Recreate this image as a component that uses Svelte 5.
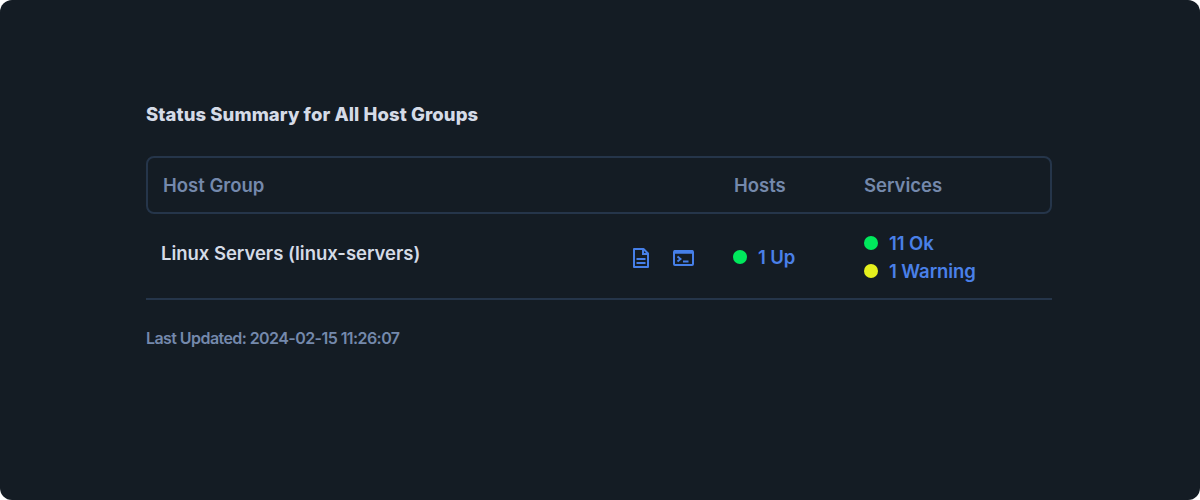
<script>
  const services = [
    { label: '11 Ok', tone: 'ok' },
    { label: '1 Warning', tone: 'warning' }
  ];
</script>

<main class="panel">
  <h1>Status Summary for All Host Groups</h1>
  <div class="grid head">
    <div>Host Group</div>
    <div>Hosts</div>
    <div>Services</div>
  </div>
  <div class="grid row">
    <div class="title">Linux Servers (linux-servers)</div>
    <div class="icons">
      <svg width="16" height="20" viewBox="0 0 16 20" fill="none" stroke="currentColor" stroke-width="2">
        <path d="M1 1H10.5L15 5.5V19H1Z" stroke-linejoin="round" />
        <path d="M10 1V6H15M3.5 11H12.5M3.5 15H12.5" stroke-width="2" />
      </svg>
      <svg width="21" height="16" viewBox="0 0 21 16" fill="none" stroke="currentColor" stroke-width="2">
        <rect x="1" y="1" width="19" height="14" rx="1" />
        <path d="M1 2H20" stroke-width="3.5" />
        <path d="M4.5 6.5L7.5 9L4.5 11.5M10 11.5H15.5" stroke-width="1.9" />
      </svg>
    </div>
    <div class="status"><i class="dot ok"></i><span>1 Up</span></div>
    <div>
      {#each services as s}
        <div class="status"><i class="dot {s.tone}"></i><span>{s.label}</span></div>
      {/each}
    </div>
  </div>
  <p>Last Updated: 2024-02-15 11:26:07</p>
</main>

<style>
  :global(body) { background: #fff; }
  .panel {
    box-sizing: border-box;
    width: 1200px;
    height: 500px;
    padding: 100px 148px 0 146px;
    border-radius: 12px;
    background: #141c24;
    font-family: Inter, "Liberation Sans", sans-serif;
    font-size: 18.5px;
    line-height: 28px;
    color: #d5dbe7;
    white-space: nowrap;
    overflow: hidden;
  }
  h1 { margin: 0 0 28px; font-size: 18.5px; font-weight: 800; line-height: 28px; letter-spacing: 0.08px; }
  .grid { display: grid; box-sizing: border-box; width: 906px; align-items: center; }
  .head {
    grid-template-columns: 571px 130px 1fr;
    height: 58px;
    padding-left: 15px;
    border: 2px solid #25354a;
    border-radius: 8px;
    color: #7489ac;
    font-weight: 600;
  }
  .row {
    grid-template-columns: 472px 100px 131px 1fr;
    height: 86px;
    padding: 2px 0 0 15px;
    border-bottom: 2px solid #25354a;
    font-weight: 600;
  }
  .title { padding-bottom: 8px; letter-spacing: -0.03px; }
  .icons { display: flex; align-items: center; gap: 24px; padding-top: 1px; color: #467fe8; }
  .status { display: flex; align-items: center; gap: 11px; height: 28px; color: #4a80e8; }
  .status span { font-weight: 600; letter-spacing: -0.08px; }
  .dot { width: 14px; height: 14px; border-radius: 50%; }
  .ok { background: #00e85c; }
  .warning { background: #e5f01d; }
  p { margin: 24px 0 0; font-size: 16px; line-height: 28px; letter-spacing: -0.57px; color: #7489ac; font-weight: 600; }
</style>
